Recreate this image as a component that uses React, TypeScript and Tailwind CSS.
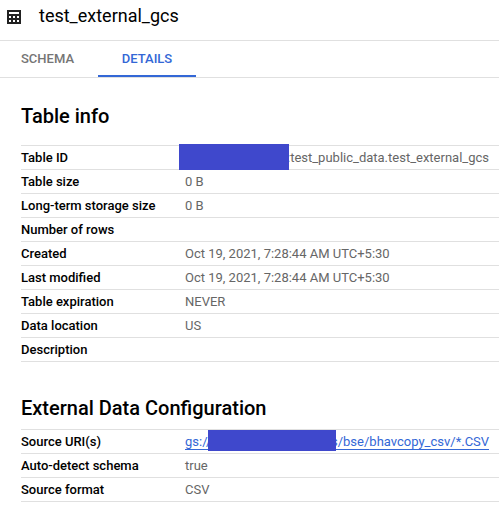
import type { ReactNode } from 'react';

const info = [
  ['Table size', '0 B'],
  ['Long-term storage size', '0 B'],
  ['Number of rows', ''],
  ['Created', 'Oct 19, 2021, 7:28:44 AM UTC+5:30'],
  ['Last modified', 'Oct 19, 2021, 7:28:44 AM UTC+5:30'],
  ['Table expiration', 'NEVER'],
  ['Data location', 'US'],
  ['Description', ''],
];

function Row({ label, children }: { label: string; children?: ReactNode }) {
  return (
    <div className="flex h-6 items-center border-b border-[#e0e0e0] whitespace-nowrap">
      <div className="w-[164px] shrink-0 font-medium text-black">{label}</div>
      <div className="flex h-[23px] items-center text-[#666666]">{children}</div>
    </div>
  );
}

export default function App() {
  return (
    <div className="h-[507px] w-[499px] overflow-hidden bg-white font-[Roboto,sans-serif] text-[13px] leading-5">
      <header className="flex h-[41px] items-start border-b border-[#e0e0e0] pl-[7px]">
        <svg className="mt-[10px] h-[14px] w-[14px]" viewBox="0 0 14 14" fill="#212121" shapeRendering="crispEdges">
          <path fillRule="evenodd" d="M0 0h14v14H0zM2 2v2h10V2zM2 6v2h2V6zM6 6v2h2V6zM10 6v2h2V6zM2 10v2h2v-2zM6 10v2h2v-2zM10 10v2h2v-2z" />
        </svg>
        <h1 className="mt-[4px] ml-[18px] text-[18px] leading-6 text-black">test_external_gcs</h1>
      </header>
      <nav className="flex h-[37px] border-b border-[#e0e0e0] font-medium">
        <div className="flex w-[98px] items-center pl-[21px] text-[#757575]">SCHEMA</div>
        <div className="flex h-[36px] w-[98px] items-center justify-center border-b-2 border-[#3367d6] pt-[2px] text-[#3367d6]">DETAILS</div>
      </nav>
      <main className="pl-[21px]">
        <h2 className="pt-[26px] text-[20px] leading-6 font-medium text-black">Table info</h2>
        <section className="mt-[17px] border-t border-[#e0e0e0]">
          <Row label="Table ID">
            <span className="z-10 -my-[2px] -mt-[3px] -ml-[6px] h-[26px] w-[110px] bg-[#3f48cc]" />
            <span className="-ml-[2px]">:test_public_data.test_external_gcs</span>
          </Row>
          {info.map(([label, value]) => <Row key={label} label={label}>{value}</Row>)}
        </section>
        <h2 className="pt-[34px] text-[20px] leading-6 font-medium text-black">External Data Configuration</h2>
        <section className="mt-[9px] border-t border-[#e0e0e0]">
          <Row label="Source URI(s)">
            <a className="flex h-[23px] items-start text-[#3367d6]">
              <span className="mt-[2px] h-[18px] w-[23px] border-b border-[#3367d6]">gs://</span>
              <span className="z-10 h-[21px] w-[128px] bg-[#3f48cc]" />
              <span className="mt-[2px] -ml-[5px] h-[18px] border-b border-[#3367d6]">s/bse/bhavcopy_csv/*.CSV</span>
            </a>
          </Row>
          <Row label="Auto-detect schema">true</Row>
          <Row label="Source format">CSV</Row>
        </section>
      </main>
    </div>
  );
}
